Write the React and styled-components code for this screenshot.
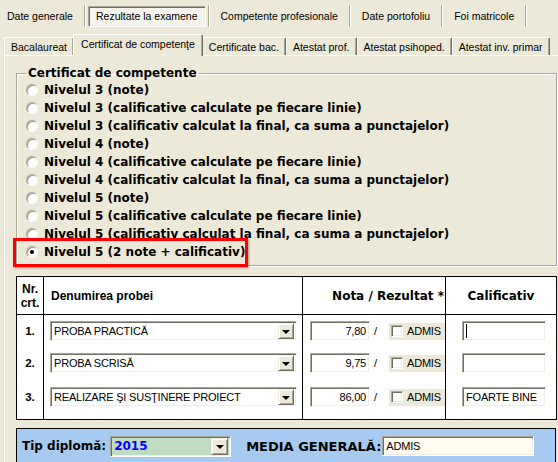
import React from 'react'
import styled, { createGlobalStyle, css } from 'styled-components'

const GlobalStyle = createGlobalStyle`
  html, body {
    margin: 0;
    padding: 0;
    background: #ece9d8;
  }
  body {
    width: 558px;
    height: 462px;
    overflow: hidden;
  }
`

// classic 3D edges
const sunken = css`
  border: 1px solid;
  border-color: #aca899 #fff #fff #aca899;
  box-shadow: inset 1px 1px 0 #716f64, inset -1px -1px 0 #f1efe2;
`
const raised = css`
  border: 1px solid;
  border-color: #f1efe2 #716f64 #716f64 #f1efe2;
  box-shadow: inset 1px 1px 0 #fff, inset -1px -1px 0 #aca899;
`

const Window = styled.div`
  width: 558px;
  height: 462px;
  overflow: hidden;
  background: #ece9d8;
  font-family: 'Liberation Sans', Arial, sans-serif;
  font-size: 10.5px;
  color: #000;
`

// Top row of page buttons
const TopBar = styled.div`
  display: flex;
  align-items: center;
  height: 32px;
  margin-left: -4px;
`
const TopItem = styled.div`
  height: 21px;
  box-sizing: border-box;
  display: flex;
  align-items: center;
  padding: 0 ${p => (p.pressed ? '7px' : '11px')};
  margin: 0 ${p => (p.pressed ? '2px' : '0')};
  white-space: nowrap;
  ${p =>
    p.pressed &&
    css`
      background: #f5f4ee;
      ${sunken}
    `}
`
const TopSep = styled.div`
  width: 0;
  height: 22px;
  border-left: 1px solid #aca899;
  border-right: 1px solid #fff;
`

// Second row: classic tabs
const TabStrip = styled.div`
  display: flex;
  align-items: flex-end;
  height: 23px;
  padding-left: 4px;
`
const Tab = styled.div`
  box-sizing: border-box;
  height: ${p => (p.active ? '22px' : '18px')};
  padding: 0 ${p => (p.active ? '7px' : '6px')};
  margin: 0 ${p => (p.active ? '-1px' : '0')} ${p => (p.active ? '-1px' : '0')};
  display: flex;
  align-items: center;
  padding-bottom: ${p => (p.active ? '3px' : '0')};
  white-space: nowrap;
  background: #ece9d8;
  border-top: 1px solid #fff;
  border-left: 1px solid #fff;
  border-right: 1px solid #716f64;
  border-top-left-radius: 2px;
  border-top-right-radius: 2px;
  box-shadow: inset -1px 0 0 #aca899;
  position: relative;
  z-index: ${p => (p.active ? 2 : 1)};
`

const Panel = styled.div`
  margin-left: 4px;
  border-left: 1px solid #fff;
  border-top: 1px solid #fff;
  padding: 10px 0 0 11px;
  height: 420px;
`

const Group = styled.fieldset`
  width: 541px;
  box-sizing: border-box;
  margin: 0;
  padding: 1px 0 4px 9px;
  border: 1px solid #aca899;
  box-shadow: inset 1px 1px 0 #fff, 1px 1px 0 #fff;
`
const Legend = styled.legend`
  font-family: 'DejaVu Sans', Verdana, sans-serif;
  font-weight: bold;
  font-size: 12px;
  padding: 0 2px;
  margin-left: 0;
  line-height: 14px;
`
const RadioRow = styled.label`
  display: flex;
  align-items: center;
  height: 18px;
  gap: 6px;
  font-family: 'DejaVu Sans', Verdana, sans-serif;
  font-weight: bold;
  font-size: 12px;
  white-space: nowrap;
  position: relative;
  ${p =>
    p.highlighted &&
    css`
      &::after {
        content: '';
        position: absolute;
        left: -13px;
        top: -5px;
        width: 235px;
        height: 29px;
        box-sizing: border-box;
        border: 3px solid #f00;
        box-shadow: 1px 1px 2px rgba(0, 0, 0, 0.35);
      }
    `}
`
const Radio = styled.span`
  width: 12px;
  height: 12px;
  box-sizing: border-box;
  border-radius: 50%;
  background: #fff;
  border: 1px solid;
  border-color: #aca899 #fff #fff #aca899;
  box-shadow: inset 1px 1px 0 #9d9a8c, 0 0 0 0.5px #e4e1d4;
  display: flex;
  align-items: center;
  justify-content: center;
  flex: none;
  &::after {
    content: '';
    width: 4px;
    height: 4px;
    border-radius: 50%;
    background: ${p => (p.checked ? '#000' : 'transparent')};
  }
`

// Results table
const Table = styled.table`
  margin-top: 10px;
  width: 540px;
  table-layout: fixed;
  border-collapse: collapse;
  border: 1px solid #000;
  background: #fff;
`
const HeadCell = styled.th`
  height: 37px;
  padding: 0 ${p => p.pr || 0}px 0 ${p => p.pl || 0}px;
  border-right: 1px solid #000;
  border-bottom: 1px solid #000;
  text-align: ${p => p.align || 'left'};
  vertical-align: middle;
  font-family: ${p => (p.wide ? "'DejaVu Sans', Verdana" : "'Liberation Sans', Arial")}, sans-serif;
  font-size: 12px;
  line-height: 14px;
  font-weight: bold;
  color: #000;
  white-space: nowrap;
`
const Cell = styled.td`
  height: ${p => (p.last ? '36px' : '32px')};
  padding: ${p => (p.last ? '0 0 4px' : '0')} ${p => p.pl || 0}px;
  padding-right: 0;
  border-right: 1px solid #000;
  vertical-align: middle;
  text-align: ${p => p.align || 'left'};
  font-size: 11.5px;
  font-weight: ${p => (p.bold ? 'bold' : 'normal')};
`
const CellRow = styled.div`
  display: flex;
  align-items: center;
`
const Field = styled.div`
  box-sizing: border-box;
  width: ${p => p.w}px;
  height: ${p => p.h || 20}px;
  ${sunken}
  background: ${p => p.bg || '#fff'};
  display: flex;
  align-items: center;
  justify-content: ${p => (p.right ? 'flex-end' : 'flex-start')};
  padding: 0 ${p => (p.right ? '3px' : '2px')} 0 ${p => (p.right ? '2px' : '3px')};
  font-family: 'Liberation Sans', Arial, sans-serif;
  font-size: 11px;
  letter-spacing: -0.2px;
  font-weight: normal;
  white-space: nowrap;
  overflow: hidden;
`
const FieldText = styled.span`
  flex: 1;
  color: ${p => p.color || '#000'};
  font-family: ${p => (p.bold ? "'DejaVu Sans', Verdana, sans-serif" : 'inherit')};
  font-weight: ${p => (p.bold ? 'bold' : 'normal')};
  font-size: ${p => (p.bold ? '12px' : 'inherit')};
  letter-spacing: ${p => (p.bold ? '0' : 'inherit')};
`
const Caret = styled.span`
  width: 1px;
  height: 14px;
  background: #000;
`
const DropButton = styled.span`
  box-sizing: border-box;
  width: ${p => p.w || 16}px;
  height: ${p => p.h || 16}px;
  background: #ece9d8;
  ${raised}
  display: flex;
  align-items: center;
  justify-content: center;
  flex: none;
  &::after {
    content: '';
    border-left: 4px solid transparent;
    border-right: 4px solid transparent;
    border-top: 4px solid #000;
    margin-top: 1px;
  }
`
const Slash = styled.span`
  margin: 0 0 0 4px;
  font-size: 11px;
`
const CheckGroup = styled.div`
  margin-left: auto;
  width: 56px;
  height: 17px;
  background: #ece9d8;
  display: flex;
  align-items: center;
  gap: 4px;
  padding-left: 2px;
  box-sizing: border-box;
  font-size: 11px;
  letter-spacing: -0.2px;
`
const Check = styled.span`
  width: 12px;
  height: 12px;
  box-sizing: border-box;
  background: #fff;
  ${sunken}
  flex: none;
`

// Bottom summary bar
const SummaryBar = styled.div`
  margin-top: 8px;
  width: 540px;
  height: 36px;
  box-sizing: border-box;
  background: #a6caf0;
  border: 1px solid #000;
  display: flex;
  align-items: center;
  padding-left: 5px;
`
const BarLabel = styled.span`
  font-family: 'DejaVu Sans', Verdana, sans-serif;
  font-weight: bold;
  font-size: ${p => p.size || 12}px;
  margin: 0 ${p => p.mr || 0}px 0 ${p => p.ml || 0}px;
  white-space: nowrap;
`

const levels = [
  'Nivelul 3 (note)',
  'Nivelul 3 (calificative calculate pe fiecare linie)',
  'Nivelul 3 (calificativ calculat la final, ca suma a punctajelor)',
  'Nivelul 4 (note)',
  'Nivelul 4 (calificative calculate pe fiecare linie)',
  'Nivelul 4 (calificativ calculat la final, ca suma a punctajelor)',
  'Nivelul 5 (note)',
  'Nivelul 5 (calificative calculate pe fiecare linie)',
  'Nivelul 5 (calificativ calculat la final, ca suma a punctajelor)',
  'Nivelul 5 (2 note + calificativ)',
]

const probe = [
  { nr: '1.', name: 'PROBA PRACTICĂ', nota: '7,80', calif: '', caret: true },
  { nr: '2.', name: 'PROBA SCRISĂ', nota: '9,75', calif: '' },
  { nr: '3.', name: 'REALIZARE ŞI SUSŢINERE PROIECT', nota: '86,00', calif: 'FOARTE BINE' },
]

const App = () => {
  return (
    <Window>
      <GlobalStyle />
      <TopBar>
        <TopItem>Date generale</TopItem>
        <TopSep />
        <TopItem pressed>Rezultate la examene</TopItem>
        <TopSep />
        <TopItem>Competente profesionale</TopItem>
        <TopSep />
        <TopItem>Date portofoliu</TopItem>
        <TopSep />
        <TopItem>Foi matricole</TopItem>
        <TopSep />
      </TopBar>

      <TabStrip>
        <Tab>Bacalaureat</Tab>
        <Tab active>Certificat de competenţe</Tab>
        <Tab>Certificate bac.</Tab>
        <Tab>Atestat prof.</Tab>
        <Tab>Atestat psihoped.</Tab>
        <Tab>Atestat inv. primar</Tab>
      </TabStrip>

      <Panel>
        <Group>
          <Legend>Certificat de competente</Legend>
          {levels.map((l, i) => (
            <RadioRow key={i} highlighted={i === levels.length - 1}>
              <Radio checked={i === levels.length - 1} />
              {l}
            </RadioRow>
          ))}
        </Group>

        <Table>
          <colgroup>
            <col style={{ width: 27 }} />
            <col style={{ width: 259 }} />
            <col style={{ width: 143 }} />
            <col style={{ width: 111 }} />
          </colgroup>
          <thead>
            <tr>
              <HeadCell align='center'>
                Nr.
                <br />
                crt.
              </HeadCell>
              <HeadCell pl={7}>Denumirea probei</HeadCell>
              <HeadCell wide align='right' pr={1}>
                Nota / Rezultat *
              </HeadCell>
              <HeadCell wide align='center'>
                Calificativ
              </HeadCell>
            </tr>
          </thead>
          <tbody>
            {probe.map((p, i) => {
              const last = i === probe.length - 1
              return (
                <tr key={p.nr}>
                  <Cell last={last} bold align='center'>
                    {p.nr}
                  </Cell>
                  <Cell last={last} pl={6}>
                    <Field w={247}>
                      <FieldText>{p.name}</FieldText>
                      <DropButton />
                    </Field>
                  </Cell>
                  <Cell last={last} pl={7}>
                    <CellRow>
                      <Field w={60} right>
                        {p.nota}
                      </Field>
                      <Slash>/</Slash>
                      <CheckGroup>
                        <Check />
                        ADMIS
                      </CheckGroup>
                    </CellRow>
                  </Cell>
                  <Cell last={last} pl={16}>
                    <Field w={84}>
                      {p.caret ? <Caret /> : p.calif}
                    </Field>
                  </Cell>
                </tr>
              )
            })}
          </tbody>
        </Table>

        <SummaryBar>
          <BarLabel mr={4}>Tip diplomă:</BarLabel>
          <Field w={121} h={21} bg='#c0dcc0'>
            <FieldText bold color='#0000ff'>
              2015
            </FieldText>
            <DropButton w={17} h={17} />
          </Field>
          <BarLabel size={13} ml={15} mr={1}>
            MEDIA GENERALĂ:
          </BarLabel>
          <Field w={152} bg='#fffbf0'>
            ADMIS
          </Field>
        </SummaryBar>
      </Panel>
    </Window>
  )
}

export default App
